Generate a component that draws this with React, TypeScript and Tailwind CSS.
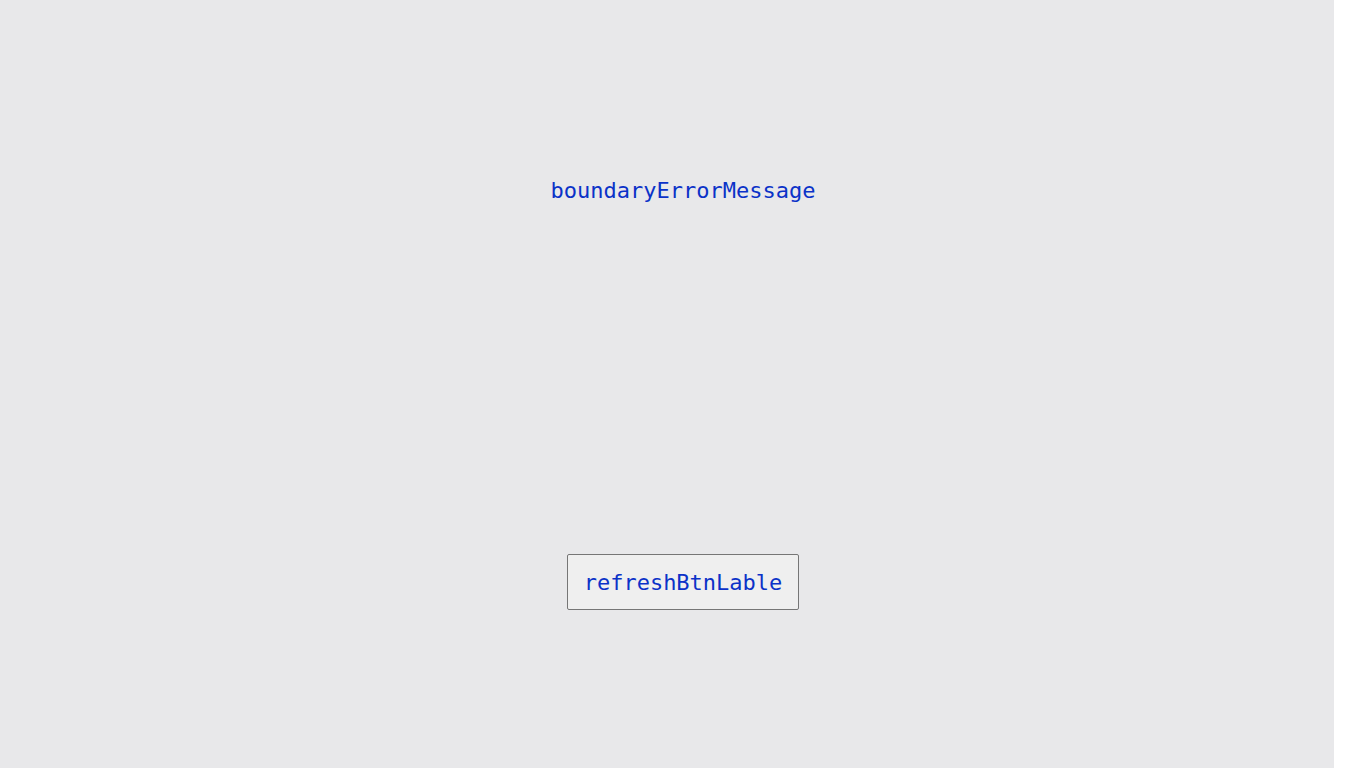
import React from 'react';

export default function App() {
  return (
    <div className="w-[1350px] h-[768px] bg-white flex">
      <div
        className="w-[1334px] h-[768px] bg-[#e8e8ea] flex flex-col items-center pl-[32px] text-[#0b32c8]"
        style={{ fontFamily: '"DejaVu Sans Mono", "Liberation Mono", monospace' }}
      >
        <p className="mt-[176px] text-[22px] leading-[30px]">boundaryErrorMessage</p>
        <button
          onClick={() => window.location.reload()}
          className="mt-[348px] w-[232px] h-[56px] flex items-center justify-center pt-[2px] border border-[#767676] rounded-[2px] bg-[#efefef] text-[22px] leading-[30px] text-[#0b32c8]"
        >
          refreshBtnLable
        </button>
      </div>
    </div>
  );
}
